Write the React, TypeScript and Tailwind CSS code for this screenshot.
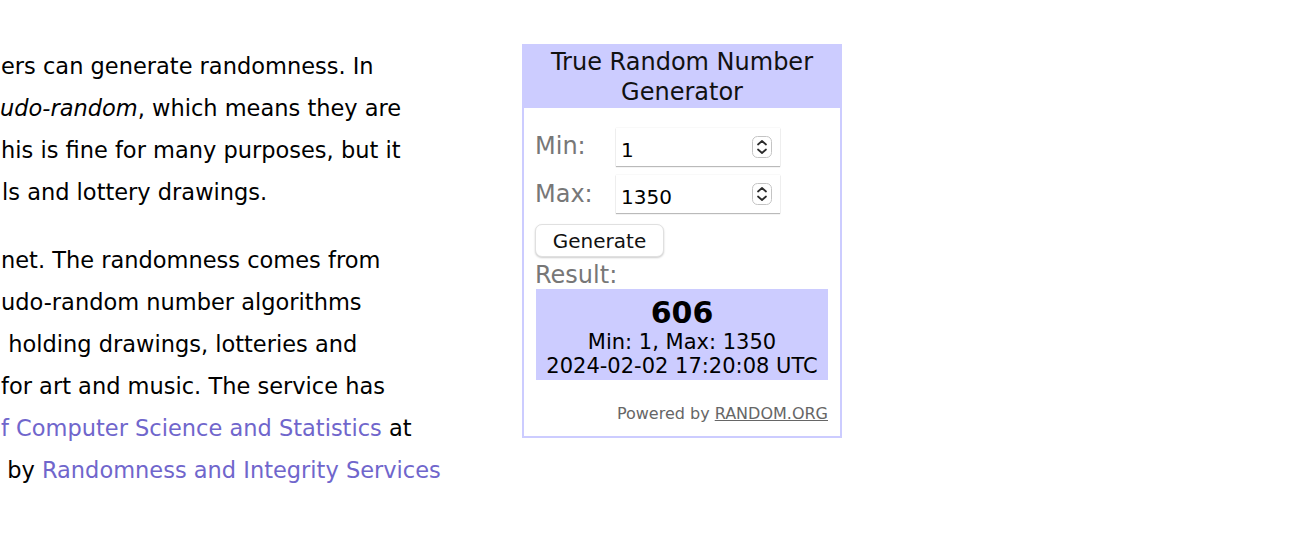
const lines1 = [
  { t: "ers can generate randomness. In", pl: "pl-[1px]" },
  { t: "udo-random", pl: "pl-0", italic: true, rest: ", which means they are" },
  { t: "his is fine for many purposes, but it", pl: "pl-[1px]" },
  { t: "ls and lottery drawings.", pl: "pl-[2px]" },
];

const lines2 = [
  "net. The randomness comes from",
  "udo-random number algorithms",
  " holding drawings, lotteries and",
  "for art and music. The service has",
];

const Spinner = () => (
  <svg width="20" height="22" viewBox="0 0 20 22" className="shrink-0">
    <rect x="0.5" y="0.5" width="19" height="21" rx="5" fill="#fff" stroke="#c4c4c4" />
    <path d="M6 8.5 L10 5 L14 8.5" fill="none" stroke="#2a2a2a" strokeWidth="1.7" strokeLinecap="round" strokeLinejoin="round" />
    <path d="M6 13.5 L10 17 L14 13.5" fill="none" stroke="#2a2a2a" strokeWidth="1.7" strokeLinecap="round" strokeLinejoin="round" />
  </svg>
);

const NumberField = ({ value }: { value: string }) => (
  <div className="w-[164px] h-[38px] bg-white flex items-center justify-between pl-[5px] pr-[8px] shadow-[0_1px_1px_rgba(0,0,0,0.25),0_0_1px_rgba(0,0,0,0.15)]">
    <span className="text-[20px] text-black pt-[5px]">{value}</span>
    <Spinner />
  </div>
);

export default function App() {
  return (
    <div className="w-[1292px] h-[538px] bg-white overflow-hidden flex">
      {/* text column, clipped on the left */}
      <div className="w-[522px] shrink-0 pt-[45px] font-['DejaVu_Sans',sans-serif] text-[22.5px] leading-[42px] text-black">
        <div className="mb-[26px]">
          {lines1.map((l, i) => (
            <div key={i} className={`whitespace-pre ${l.pl}`}>
              {l.italic ? (
                <>
                  <em>{l.t}</em>
                  {l.rest}
                </>
              ) : (
                l.t
              )}
            </div>
          ))}
        </div>
        <div>
          {lines2.map((l, i) => (
            <div key={i} className="whitespace-pre pl-[1px]">
              {l}
            </div>
          ))}
          <div className="whitespace-pre pl-[1px]">
            <a className="text-[#7066cc]">f Computer Science and Statistics</a> at
          </div>
          <div className="whitespace-pre">
            {" by "}
            <a className="text-[#7066cc]">Randomness and Integrity Services</a>
          </div>
        </div>
      </div>

      {/* widget */}
      <div className="mt-[44px] w-[320px] h-[394px] border-2 border-[#ccccff] bg-white flex flex-col font-['DejaVu_Sans',Verdana,sans-serif]">
        <div className="bg-[#ccccff] text-center text-[24px] leading-[30px] text-[#111] pt-[1px] pb-[1px]">
          True Random Number
          <br />
          Generator
        </div>
        <div className="flex flex-col px-[11px]">
          <div className="flex items-center mt-[20px]">
            <span className="w-[81px] text-[24px] leading-[30px] text-[#777] pb-[2px]">Min:</span>
            <NumberField value="1" />
          </div>
          <div className="flex items-center mt-[9px]">
            <span className="w-[81px] text-[24px] leading-[30px] text-[#777]">Max:</span>
            <NumberField value="1350" />
          </div>
          <button className="mt-[11px] self-start w-[129px] h-[33px] rounded-[7px] bg-white text-[20px] leading-[24px] text-[#111] border border-[#e0e0e0] shadow-[0_1px_2px_rgba(0,0,0,0.2)]">
            Generate
          </button>
          <div className="text-[24px] leading-[28px] text-[#777] mt-[4px]">Result:</div>
          <div className="bg-[#ccccff] h-[91px] mx-[1px] flex flex-col items-center pt-[7px]">
            <span className="text-[30px] leading-[34px] font-bold text-black">606</span>
            <span className="text-[21px] leading-[24px] text-black">Min: 1, Max: 1350</span>
            <span className="text-[21px] leading-[24px] text-black">2024-02-02 17:20:08 UTC</span>
          </div>
          <div className="mt-[22px] self-end text-[16px] text-[#666] pr-[1px]">
            Powered by <span className="underline">RANDOM.ORG</span>
          </div>
        </div>
      </div>
    </div>
  );
}
